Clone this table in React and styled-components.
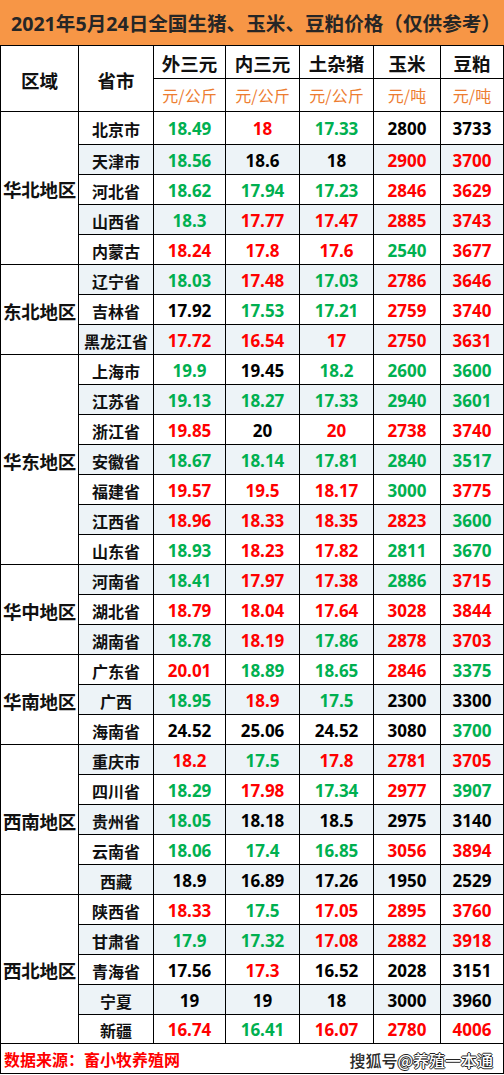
import React from "react";
import styled, { createGlobalStyle } from "styled-components";

const Global = createGlobalStyle`
  html, body { margin: 0; padding: 0; background: #fff; }
  body { font-family: "Noto Sans", "Noto Sans CJK SC", sans-serif; }
  * { box-sizing: border-box; }
`;

const COLORS = { g: "#00B050", r: "#FF0000", k: "#000000" };
const COLS = "78px 75px 72px 74px 74px 67px 63px";

const Page = styled.div`
  width: 504px;
  display: flex;
  flex-direction: column;
`;

const Title = styled.div`
  height: 46px;
  background: #F79646;
  border-bottom: 1px solid #000;
  display: flex;
  align-items: center;
  padding-left: 11px;
  font-family: "Noto Sans", "Noto Sans CJK SC", sans-serif;
  font-weight: 700;
  font-size: 19.6px;
  color: #262626;
  white-space: nowrap;
  letter-spacing: 0;
`;

const HeadGrid = styled.div`
  display: grid;
  grid-template-columns: ${COLS};
  grid-template-rows: 33px 33px;
  border-left: 1px solid #000;
`;

const Body = styled.div`
  display: grid;
  grid-template-columns: ${COLS};
  grid-template-rows: 33px repeat(29, 30px) 29px;
  border-left: 1px solid #000;
`;

const Cell = styled.div`
  border-right: 1px solid #000;
  border-bottom: 1px solid #000;
  display: flex;
  align-items: center;
  justify-content: center;
  white-space: nowrap;
  background: ${(p) => (p.$shade ? "#EDF3F7" : "#fff")};
`;

const HeadCell = styled(Cell)`
  font-family: "Noto Sans CJK SC", sans-serif;
  font-weight: 700;
  font-size: 18.5px;
  color: #111;
  grid-row: ${(p) => (p.$tall ? "span 2" : "auto")};
  padding-top: 2px;
`;

const UnitCell = styled(Cell)`
  font-family: "Noto Sans CJK SC", sans-serif;
  font-weight: 400;
  font-size: 16px;
  color: #ED7D31;
`;

const RegionCell = styled(Cell)`
  grid-row: span ${(p) => p.$span};
  font-family: "Noto Sans CJK SC", sans-serif;
  font-weight: 700;
  font-size: 18.5px;
  color: #111;
  letter-spacing: -0.3px;
  padding-top: 2px;
`;

const ProvCell = styled(Cell)`
  font-family: "Noto Sans CJK SC", sans-serif;
  font-weight: 700;
  font-size: 16px;
  color: #111;
  padding-top: 2px;
`;

const NumCell = styled(Cell)`
  font-family: "Noto Sans", "Noto Sans CJK SC", sans-serif;
  font-weight: 700;
  font-size: 17px;
  color: ${(p) => COLORS[p.$c]};
  padding-top: 1px;
`;

const Footer = styled.div`
  height: 30px;
  border-left: 1px solid #000;
  border-right: 1px solid #000;
  border-bottom: 1px solid #000;
  display: flex;
  align-items: center;
  justify-content: space-between;
  padding: 0 10px 0 3px;
`;

const Source = styled.span`
  font-family: "Noto Sans CJK SC", sans-serif;
  font-weight: 700;
  font-size: 16px;
  color: #FF0000;
`;

const Watermark = styled.span`
  font-family: "Noto Sans CJK SC", sans-serif;
  font-weight: 500;
  font-size: 16px;
  color: #2b2b2b;
  text-shadow: 0 0 1px #fff;
  padding-top: 2px;
`;

const Outline = styled.span`
  color: #fff;
  text-shadow: -1px 0 #222, 1px 0 #222, 0 -1px #222, 0 1px #222;
`;

const data = [
  ["华北地区", [
    ["北京市", ["18.49", "g"], ["18", "r"], ["17.33", "g"], ["2800", "k"], ["3733", "k"]],
    ["天津市", ["18.56", "g"], ["18.6", "k"], ["18", "k"], ["2900", "r"], ["3700", "r"]],
    ["河北省", ["18.62", "g"], ["17.94", "g"], ["17.23", "g"], ["2846", "r"], ["3629", "r"]],
    ["山西省", ["18.3", "g"], ["17.77", "r"], ["17.47", "r"], ["2885", "r"], ["3743", "r"]],
    ["内蒙古", ["18.24", "r"], ["17.8", "r"], ["17.6", "r"], ["2540", "g"], ["3677", "r"]],
  ]],
  ["东北地区", [
    ["辽宁省", ["18.03", "g"], ["17.48", "r"], ["17.03", "g"], ["2786", "r"], ["3646", "r"]],
    ["吉林省", ["17.92", "k"], ["17.53", "g"], ["17.21", "g"], ["2759", "r"], ["3740", "r"]],
    ["黑龙江省", ["17.72", "r"], ["16.54", "r"], ["17", "r"], ["2750", "r"], ["3631", "r"]],
  ]],
  ["华东地区", [
    ["上海市", ["19.9", "g"], ["19.45", "k"], ["18.2", "g"], ["2600", "g"], ["3600", "g"]],
    ["江苏省", ["19.13", "g"], ["18.27", "g"], ["17.33", "g"], ["2940", "g"], ["3601", "g"]],
    ["浙江省", ["19.85", "r"], ["20", "k"], ["20", "r"], ["2738", "r"], ["3740", "r"]],
    ["安徽省", ["18.67", "g"], ["18.14", "g"], ["17.81", "g"], ["2840", "g"], ["3517", "g"]],
    ["福建省", ["19.57", "r"], ["19.5", "r"], ["18.17", "r"], ["3000", "g"], ["3775", "r"]],
    ["江西省", ["18.96", "r"], ["18.33", "r"], ["18.35", "r"], ["2823", "r"], ["3600", "g"]],
    ["山东省", ["18.93", "g"], ["18.23", "r"], ["17.82", "r"], ["2811", "g"], ["3670", "g"]],
  ]],
  ["华中地区", [
    ["河南省", ["18.41", "g"], ["17.97", "r"], ["17.38", "r"], ["2886", "g"], ["3715", "r"]],
    ["湖北省", ["18.79", "r"], ["18.04", "r"], ["17.64", "r"], ["3028", "r"], ["3844", "r"]],
    ["湖南省", ["18.78", "g"], ["18.19", "r"], ["17.86", "g"], ["2878", "r"], ["3703", "r"]],
  ]],
  ["华南地区", [
    ["广东省", ["20.01", "r"], ["18.89", "g"], ["18.65", "g"], ["2846", "r"], ["3375", "g"]],
    ["广西", ["18.95", "g"], ["18.9", "r"], ["17.5", "g"], ["2300", "k"], ["3300", "k"]],
    ["海南省", ["24.52", "k"], ["25.06", "k"], ["24.52", "k"], ["3080", "k"], ["3700", "g"]],
  ]],
  ["西南地区", [
    ["重庆市", ["18.2", "r"], ["17.5", "g"], ["17.8", "r"], ["2781", "r"], ["3705", "r"]],
    ["四川省", ["18.29", "g"], ["17.98", "r"], ["17.34", "g"], ["2977", "r"], ["3907", "g"]],
    ["贵州省", ["18.05", "g"], ["18.18", "k"], ["18.5", "k"], ["2975", "k"], ["3140", "k"]],
    ["云南省", ["18.06", "g"], ["17.4", "g"], ["16.85", "g"], ["3056", "r"], ["3894", "r"]],
    ["西藏", ["18.9", "k"], ["16.89", "k"], ["17.26", "k"], ["1950", "k"], ["2529", "k"]],
  ]],
  ["西北地区", [
    ["陕西省", ["18.33", "r"], ["17.5", "g"], ["17.05", "r"], ["2895", "r"], ["3760", "r"]],
    ["甘肃省", ["17.9", "g"], ["17.32", "g"], ["17.08", "r"], ["2882", "r"], ["3918", "r"]],
    ["青海省", ["17.56", "k"], ["17.3", "r"], ["16.52", "k"], ["2028", "k"], ["3151", "k"]],
    ["宁夏", ["19", "k"], ["19", "k"], ["18", "k"], ["3000", "k"], ["3960", "k"]],
    ["新疆", ["16.74", "r"], ["16.41", "g"], ["16.07", "r"], ["2780", "r"], ["4006", "r"]],
  ]],
];

export default function App() {
  let idx = 0;
  const cells = [];
  data.forEach(([region, rows]) => {
    cells.push(
      <RegionCell key={region} $span={rows.length}>{region}</RegionCell>
    );
    rows.forEach(([prov, ...vals]) => {
      const shade = idx % 2 === 1;
      cells.push(<ProvCell key={prov} $shade={shade}>{prov}</ProvCell>);
      vals.forEach(([v, c], j) => {
        cells.push(
          <NumCell key={prov + j} $shade={shade} $c={c}>{v}</NumCell>
        );
      });
      idx += 1;
    });
  });

  return (
    <Page>
      <Global />
      <Title>2021年5月24日全国生猪、玉米、豆粕价格（仅供参考）</Title>
      <HeadGrid>
        <HeadCell $tall>区域</HeadCell>
        <HeadCell $tall>省市</HeadCell>
        <HeadCell>外三元</HeadCell>
        <HeadCell>内三元</HeadCell>
        <HeadCell>土杂猪</HeadCell>
        <HeadCell>玉米</HeadCell>
        <HeadCell>豆粕</HeadCell>
        <UnitCell>元/公斤</UnitCell>
        <UnitCell>元/公斤</UnitCell>
        <UnitCell>元/公斤</UnitCell>
        <UnitCell>元/吨</UnitCell>
        <UnitCell>元/吨</UnitCell>
      </HeadGrid>
      <Body>{cells}</Body>
      <Footer>
        <Source>数据来源：畜小牧养殖网</Source>
        <Watermark>
          搜狐号<Outline>@养殖一本通</Outline>
        </Watermark>
      </Footer>
    </Page>
  );
}
